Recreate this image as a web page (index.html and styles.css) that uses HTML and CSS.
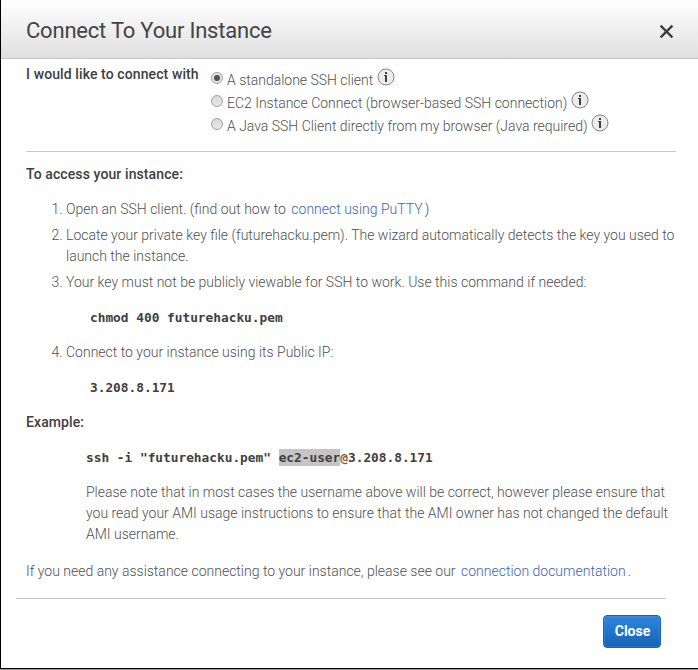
FILE: index.html
```html
<!DOCTYPE html>
<html lang="en"><head><meta charset="utf-8"><title>Connect To Your Instance</title><link rel="stylesheet" href="styles.css"></head>
<body>
<main class="dialog">
<header class="head"><h1 class="title">Connect To Your Instance</h1>
<svg class="x" viewBox="0 0 14 14"><path d="M1.5 1.5l11 11M12.5 1.5l-11 11"/></svg></header>
<section class="choices"><strong class="label">I would like to connect with</strong>
<div class="options">
<div class="option"><i class="radio on"></i><span class="text">A standalone SSH client</span><svg class="info" viewBox="0 0 18 18"><circle cx="9" cy="9" r="8"/><path d="M8 4h2v2H8zM7 7h3v7H8V8H7z"/></svg></div>
<div class="option"><i class="radio"></i><span class="text">EC2 Instance Connect (browser-based SSH connection)</span><svg class="info" viewBox="0 0 18 18"><circle cx="9" cy="9" r="8"/><path d="M8 4h2v2H8zM7 7h3v7H8V8H7z"/></svg></div>
<div class="option"><i class="radio"></i><span class="text">A Java SSH Client directly from my browser (Java required)</span><svg class="info" viewBox="0 0 18 18"><circle cx="9" cy="9" r="8"/><path d="M8 4h2v2H8zM7 7h3v7H8V8H7z"/></svg></div>
</div></section>
<section class="steps">
<h2 class="sub">To access your instance:</h2>
<ol class="list">
<li>Open an SSH client. (find out how to <a class="putty">connect using PuTTY</a>)</li>
<li>Locate your private key file (futurehacku.pem). The wizard automatically detects the key you used to<br>launch the instance.</li>
<li>Your key must not be publicly viewable for SSH to work. Use this command if needed:<code class="code">chmod 400 futurehacku.pem</code></li>
<li>Connect to your instance using its Public IP:<code class="code">3.208.8.171</code></li>
</ol>
<h2 class="sub">Example:</h2>
<code class="ssh">ssh -i "futurehacku.pem" <span class="mark">ec2-user</span><span class="at">@</span>3.208.8.171</code>
<p class="note">Please note that in most cases the username above will be correct, however please ensure that<br>you read your AMI usage instructions to ensure that the AMI owner has not changed the default<br>AMI username.</p>
<p class="help">If you need any assistance connecting to your instance, please see our <a class="docs">connection documentation</a>.</p>
</section>
<footer class="foot"><button class="close">Close</button></footer>
</main>
</body></html>
```
FILE: styles.css
```css
*{box-sizing:border-box}
body{margin:0;height:670px;border-bottom:1px solid #999;background:#fff;font:300 14px/21px Roboto,sans-serif;color:#505050}
.dialog{height:669px;border-left:1px solid #000;border-bottom:1px solid #000;overflow:hidden}
.head{height:59px;border-bottom:1px solid #c4c4c4;background:linear-gradient(#fff,#dfdfdf);display:flex;justify-content:space-between;align-items:center;padding:4px 24px 0 25px}
.title{margin:0;font-size:22px;letter-spacing:-.21px;font-weight:400;line-height:30px;color:#444}
.x{width:15px;height:15px;stroke:#3d3d3d;stroke-width:2.2;fill:none}
.choices{height:93px;margin:0 22px 0 25px;border-bottom:1px solid #c8c8c8;display:flex;padding-top:5px}
.label{width:185px;font-weight:500;letter-spacing:.1px;color:#404040}
.options{padding-top:2px}
.option{display:flex;height:23px;align-items:center;white-space:nowrap}
.text{padding-top:6px;letter-spacing:-.01px}
.radio{width:12px;height:12px;border:1px solid #a0a0a0;border-radius:50%;background:linear-gradient(#d9d9d9,#e8e8e8);margin-right:4px}
.on{background:radial-gradient(circle,#555 0 2.7px,#e4e4e4 3.5px)}
.info{width:18px;height:18px;margin:0 0 1px 4px}
.info circle{fill:#ececec;stroke:#858585;stroke-width:1}
.info path{fill:#404040}
.steps{padding:12px 0 0 25px;white-space:nowrap}
.sub{margin:0;font-size:14px;font-weight:500;letter-spacing:.1px;color:#404040}
.list{margin:14px 0;padding-left:40px}
.list li{margin-bottom:5px}
a{color:#3e63ae;margin-left:2px}
.putty{margin-right:2px}
.docs{margin-right:2px}
.code,.ssh{display:block;font:700 12.8px/20px "DejaVu Sans Mono",monospace;margin:15px 0 14px 24px;color:#404040}
.ssh{line-height:17px;margin:16px 0 16px 60px}
.mark{display:inline-block;background:#c5c5c5}
.at{color:#84583b}
.note{margin:0 0 16px 60px}
.help{margin:0}
.foot{margin:16px 32px 0 15px;border-top:1px solid #c8c8c8;padding:16px 5px;display:flex;justify-content:flex-end}
.close{width:58px;height:33px;border:1px solid #1462b5;border-radius:4px;background:linear-gradient(#2e85dc,#1463b8);box-shadow:inset 0 0 0 1px #ffffff18;color:#fff;font:700 14px Roboto,sans-serif;padding:0 0 1px 1px}
```
